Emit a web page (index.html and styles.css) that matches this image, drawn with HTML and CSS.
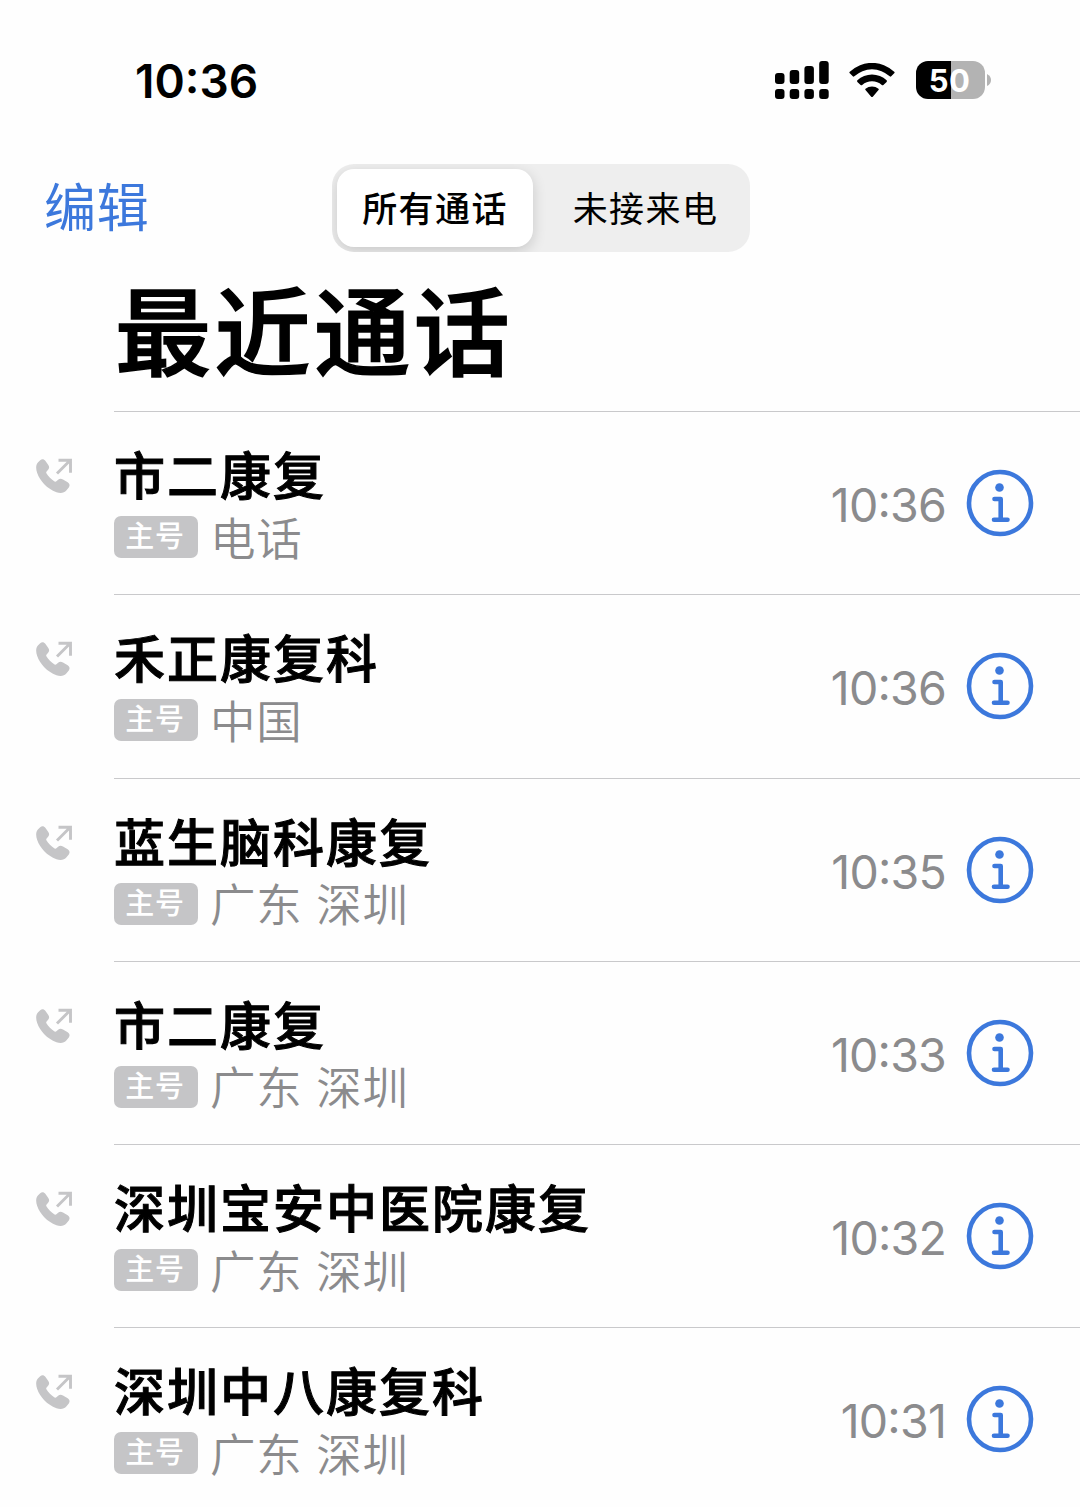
FILE: index.html
```html
<!DOCTYPE html>
<html lang="zh-CN">
<head>
<meta charset="utf-8">
<title>最近通话</title>
<link rel="stylesheet" href="styles.css">
</head>
<body>
<svg class="defs" aria-hidden="true">
  <symbol id="outgoing" viewBox="0 0 36 36">
    <path fill="currentColor" d="M4.200 2.300C5.900.800 8 1.100 9.500 3l2.800 3.900c1.200 1.700 1.100 3.500-.2 4.800l-1.500 1.700c-.5.5-.5 1.100-.2 1.800 1.700 3 5 6.400 8.200 8.200.7.4 1.300.3 1.800-.2l1.700-1.500c1.400-1.300 3.200-1.400 4.900-.3l4.700 2.900c2 1.400 2.400 3.400 1.100 5.200l-2.300 2.800c-2.400 2.800-6 3.400-10 1.900C10.900 30.500 3.900 22.700 1.200 14.900-.4 10.500-.1 6.700 1.900 4.600z"/>
    <path fill="none" stroke="currentColor" stroke-width="2.900" d="M21 15.500 34 2.500M22.500 2.200h12v12.500"/>
  </symbol>
  <symbol id="info" viewBox="0 0 68 68">
    <g fill="none" stroke="currentColor" stroke-linecap="round" stroke-linejoin="round">
      <circle cx="34" cy="34" r="31" stroke-width="4.600"/>
      <path stroke-width="4.600" d="M28.500 30h6.200v20.500M28 50.700h13.500"/>
    </g>
    <circle cx="33.500" cy="18.500" r="4.300" fill="currentColor"/>
  </symbol>
</svg>
<header class="status">
  <time class="clock">10:36</time>
  <div class="indicators">
    <svg class="signal" viewBox="0 0 54 38">
      <rect x="0" y="12" width="9.500" height="11" rx="3"/><rect x="14.700" y="9" width="9.500" height="14" rx="3"/><rect x="29.400" y="5" width="9.500" height="18" rx="3"/><rect x="44.200" y="0" width="9.500" height="23" rx="3"/>
      <rect x="0" y="28" width="9.500" height="10" rx="3"/><rect x="14.700" y="28" width="9.500" height="10" rx="3"/><rect x="29.400" y="28" width="9.500" height="10" rx="3"/><rect x="44.200" y="28" width="9.500" height="10" rx="3"/>
    </svg>
    <svg class="wifi" viewBox="0 0 46 35">
      <path d="M.8 8.800a32 32 0 0 1 44.400 0q.8.700 0 1.500l-3 3q-.7.700-1.500 0a26 26 0 0 0-35.400 0q-.8.700-1.500 0l-3-3q-.8-.8 0-1.500z"/>
      <path d="M8.400 17.300a21 21 0 0 1 29.200 0q.8.800 0 1.600l-3.200 3.100q-.8.700-1.600 0a14.700 14.700 0 0 0-19.600 0q-.8.700-1.600 0L8.400 18.900q-.8-.8 0-1.600z"/>
      <path d="M16.500 25.700a10.300 10.300 0 0 1 13 0q.7.700 0 1.400l-5.700 6.600q-.8.800-1.600 0l-5.700-6.600q-.7-.7 0-1.400z"/>
    </svg>
    <div class="battery"><div class="cell">50</div><svg class="cap" viewBox="0 0 4 12"><path d="M0 0q4 2 4 6t-4 6z"/></svg></div>
  </div>
</header>
<nav class="toolbar">
  <a class="edit">编辑</a>
  <div class="tabs"><div class="tab active">所有通话</div><div class="tab">未接来电</div></div>
</nav>
<h1>最近通话</h1>
<ul class="calls">
  <li><svg class="out"><use href="#outgoing"/></svg><div class="row"><div class="who"><div class="name">市二康复</div><div class="sub"><span class="badge">主号</span><span class="place">电话</span></div></div><time>10:36</time><svg class="info"><use href="#info"/></svg></div></li>
  <li><svg class="out"><use href="#outgoing"/></svg><div class="row"><div class="who"><div class="name">禾正康复科</div><div class="sub"><span class="badge">主号</span><span class="place">中国</span></div></div><time>10:36</time><svg class="info"><use href="#info"/></svg></div></li>
  <li><svg class="out"><use href="#outgoing"/></svg><div class="row"><div class="who"><div class="name">蓝生脑科康复</div><div class="sub"><span class="badge">主号</span><span class="place">广东 深圳</span></div></div><time>10:35</time><svg class="info"><use href="#info"/></svg></div></li>
  <li><svg class="out"><use href="#outgoing"/></svg><div class="row"><div class="who"><div class="name">市二康复</div><div class="sub"><span class="badge">主号</span><span class="place">广东 深圳</span></div></div><time>10:33</time><svg class="info"><use href="#info"/></svg></div></li>
  <li><svg class="out"><use href="#outgoing"/></svg><div class="row"><div class="who"><div class="name">深圳宝安中医院康复</div><div class="sub"><span class="badge">主号</span><span class="place">广东 深圳</span></div></div><time>10:32</time><svg class="info"><use href="#info"/></svg></div></li>
  <li><svg class="out"><use href="#outgoing"/></svg><div class="row"><div class="who"><div class="name">深圳中八康复科</div><div class="sub"><span class="badge">主号</span><span class="place">广东 深圳</span></div></div><time>10:31</time><svg class="info"><use href="#info"/></svg></div></li>
</ul>
</body>
</html>
```
FILE: styles.css
```css
* { box-sizing: border-box; }
body {
  margin: 0;
  height: 1507px;
  overflow: hidden;
  background: #fefefe;
  color: #000;
  font-family: Inter, "Noto Sans CJK SC", sans-serif;
}
.defs { display: none; }
svg { display: block; flex: none; }
time { font-feature-settings: "case" 1; }
.status {
  height: 160px;
  padding: 0 89px 0 135px;
  display: flex;
  align-items: center;
  justify-content: space-between;
}
.clock { font-size: 46px; font-weight: 600; letter-spacing: 0; line-height: 60px; padding-top: 2px; }
.indicators { display: flex; align-items: center; }
.signal { width: 54px; height: 38px; margin-right: 20px; }
.wifi { width: 46px; height: 35px; margin-right: 21px; }
.battery { display: flex; align-items: center; gap: 2px; }
.cell {
  width: 69px;
  height: 38px;
  border-radius: 12px;
  background: linear-gradient(90deg, #000 35px, #b3b3b3 35px);
  color: #fff;
  font-size: 31px;
  font-weight: 700;
  line-height: 40px;
  text-align: center;
  letter-spacing: 0.5px;
  padding-right: 2px;
}
.cap { width: 4px; height: 12px; fill: #b3b3b3; }
.toolbar {
  height: 96px;
  padding: 4px 330px 0 44px;
  display: flex;
  align-items: flex-start;
  justify-content: space-between;
}
.edit { color: #3c78dc; font-size: 52px; line-height: 80px; letter-spacing: 0.8px; padding-top: 5px; }
.tabs {
  width: 418px;
  height: 88px;
  padding: 5px;
  border-radius: 22px;
  background: #eeeeee;
  display: flex;
  overflow: hidden;
}
.tab { flex: 1; font-size: 35px; line-height: 80px; text-align: center; letter-spacing: 1.400px; }
.tab.active { flex: none; width: 196px; height: 78px; border-radius: 17px; background: #fff; font-weight: 500; box-shadow: 0 4px 14px rgba(0,0,0,.16); }
.tab:not(.active) { padding-left: 13px; }
h1 {
  margin: 0 0 0 115px;
  height: 155px;
  font-size: 96px;
  line-height: 155px;
  font-weight: 500;
  -webkit-text-stroke: 1.600px #000;
  letter-spacing: 3.600px;
}
.calls { margin: 0; padding: 0; list-style: none; }
.calls li { height: 183.300px; padding-left: 36px; display: flex; }
.out { width: 36px; height: 36px; margin-top: 47px; color: #c5c5c7; }
.row {
  flex: 1;
  margin-left: 42px;
  padding-right: 46px;
  border-top: 1px solid #c9c9cb;
  display: flex;
}
.who { flex: 1; padding-top: 32px; }
.name { font-size: 51px; line-height: 66px; font-weight: 500; -webkit-text-stroke: 1px #000; letter-spacing: 2px; }
.sub { display: flex; align-items: center; height: 54px; }
.badge {
  width: 84px;
  height: 42px;
  border-radius: 7px;
  background: #c5c5c7;
  color: #fff;
  font-size: 29px;
  line-height: 42px;
  font-weight: 500;
  text-align: center;
  letter-spacing: 0.8px;
  padding-right: 2px;
}
.place { margin-left: 12px; padding-top: 5px; color: #8b8b8d; font-family: Inter, "Noto Sans CJK SC DemiLight", "Noto Sans CJK SC", sans-serif; font-size: 45.500px; line-height: 60px; font-weight: 350; letter-spacing: 0.8px; }
.row time { color: #8b8b8d; font-size: 46.500px; line-height: 60px; margin: 63px 20px 0 0; letter-spacing: -0.8px; }
.info { width: 68px; height: 68px; margin-top: 57px; color: #3c78dc; }
```
